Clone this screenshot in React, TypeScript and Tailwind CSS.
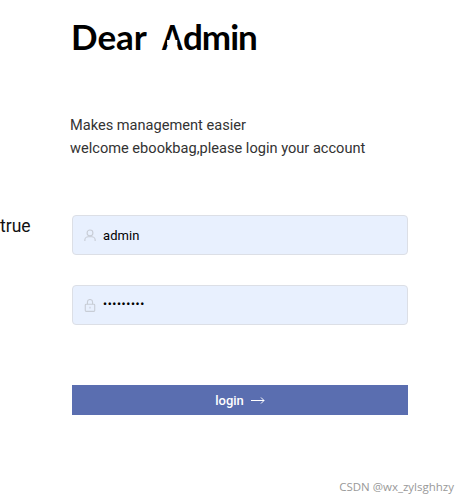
import React from "react";

export default function App() {
  return (
    <div className="relative w-[468px] h-[503px] overflow-hidden bg-white font-['Roboto','Liberation_Sans',sans-serif]">
      <div className="flex">
        <div className="w-[70px] shrink-0 pt-[215px] text-[17.5px] leading-[22px] text-[#111]">true</div>
        <div className="w-[338px] flex flex-col">
          <h1 className="pt-[15px] pl-[1px] h-[58px] text-[35px] leading-[42px] font-bold text-black font-['Lato',sans-serif]">
            Dear{" "}
            <span className="relative inline-block ml-[7px] mr-[-3px] origin-left scale-x-[0.85]">
              A
              <span className="absolute left-[6px] right-[6px] top-[25px] h-[5px] bg-white"></span>
            </span>
            <span className="tracking-[-1px]">dmin</span>
          </h1>
          <div className="mt-[56px] text-[14.6px] leading-[23px] text-[#333]">
            <p>Makes management easier</p>
            <p>welcome ebookbag,please login your account</p>
          </div>
          <form className="mt-[55px] pl-[2px] flex flex-col">
            <label className="flex items-center h-[40px] w-[336px] rounded-[4px] border border-[#dcdfe6] bg-[#e8f0fe] pl-[11px]">
              <svg width="12" height="13" viewBox="0 0 14 15" fill="none" stroke="#c8cdd6" strokeWidth="1.3" className="shrink-0">
                <circle cx="7" cy="4.500" r="3.400" />
                <path d="M1 14v-1.500C1 10.500 3 9 5 9h4c2 0 4 1.500 4 3.500V14" />
              </svg>
              <span className="ml-[7px] mt-[1px] text-[13px] text-black tracking-[0.1px]">admin</span>
            </label>
            <label className="mt-[30px] flex items-center h-[40px] w-[336px] rounded-[4px] border border-[#dcdfe6] bg-[#e8f0fe] pl-[11px]">
              <svg width="12" height="13" viewBox="0 0 14 15" fill="none" stroke="#c8cdd6" strokeWidth="1.3" className="shrink-0">
                <rect x="1.500" y="6" width="11" height="8.400" rx="1" />
                <path d="M4 6V3.500a3 3 0 0 1 6 0V6M7 9v2" />
              </svg>
              <span className="ml-[7px] text-[11px] text-black font-bold tracking-[0.7px]">•••••••••</span>
            </label>
            <button type="button" className="mt-[60px] pt-[1px] flex items-center justify-center h-[30px] w-[336px] bg-[#5a6eb0] text-white text-[13px] font-medium">
              <span>login</span>
              <svg width="14" height="9" viewBox="0 0 14 9" fill="none" stroke="white" strokeWidth="1" className="ml-[7px]">
                <path d="M0 4.500h13M10 1.500l3 3-3 3" />
              </svg>
            </button>
          </form>
        </div>
      </div>
      <div className="absolute right-[14px] top-[479px] text-[11.5px] leading-[16px] text-[#999] font-['Open_Sans',sans-serif]">CSDN @wx_zylsghhzy</div>
    </div>
  );
}
